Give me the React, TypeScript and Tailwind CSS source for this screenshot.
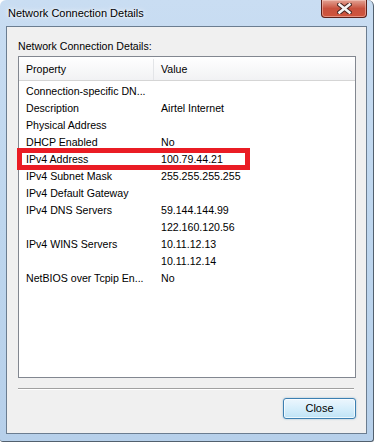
import type { ReactNode } from 'react';

type Row = { name: string; value?: string };

const rows: Row[] = [
  { name: 'Connection-specific DN...' },
  { name: 'Description', value: 'Airtel Internet' },
  { name: 'Physical Address' },
  { name: 'DHCP Enabled', value: 'No' },
  { name: 'IPv4 Address', value: '100.79.44.21' },
  { name: 'IPv4 Subnet Mask', value: '255.255.255.255' },
  { name: 'IPv4 Default Gateway' },
  { name: 'IPv4 DNS Servers', value: '59.144.144.99' },
  { name: '', value: '122.160.120.56' },
  { name: 'IPv4 WINS Servers', value: '10.11.12.13' },
  { name: '', value: '10.11.12.14' },
  { name: 'NetBIOS over Tcpip En...', value: 'No' },
];

function CloseGlyph() {
  return (
    <svg width="15" height="11" viewBox="0 0 15 11" aria-hidden>
      <path d="M2.5 1.5 L12.5 9.5 M12.5 1.5 L2.5 9.5" stroke="#4a2520" strokeWidth="4.6" strokeLinecap="square" />
      <path d="M2.5 1.5 L12.5 9.5 M12.5 1.5 L2.5 9.5" stroke="#f4f4f4" strokeWidth="2.6" strokeLinecap="square" />
    </svg>
  );
}

function Cell({ children, first }: { children?: ReactNode; first?: boolean }) {
  return (
    <div className={first ? 'w-[134px] shrink-0 truncate pl-[7px]' : 'flex-1 truncate pl-[7px]'}>
      {children}
    </div>
  );
}

export default function App() {
  return (
    <div className="relative flex h-[442px] w-[374px] flex-col overflow-hidden rounded-t-[6px] rounded-b-[3px] border-r border-b border-[#52606e] bg-gradient-to-b from-[#c9ddf2] via-[#bed6ee] to-[#b7d0ea] font-['Liberation_Sans',Arial,sans-serif] text-black">
      {/* Title bar */}
      <div className="flex h-[26px] shrink-0 items-start">
        <div className="pt-[6px] pl-[8px] text-[11px] leading-[14px] text-black [text-shadow:0_0_6px_#ffffff,0_0_3px_#ffffff]">
          Network Connection Details
        </div>
        <button
          type="button"
          aria-label="Close"
          className="mr-[6px] ml-auto flex h-[18px] w-[46px] items-center justify-center rounded-b-[4px] border border-t-0 border-[#5c2019] bg-gradient-to-b from-[#e2a294] via-[#c8513e] to-[#d0553c] shadow-[inset_0_0_0_1px_rgba(255,220,210,0.45)]"
        >
          <CloseGlyph />
        </button>
      </div>

      {/* Client area */}
      <div className="mx-[6px] mb-[7px] flex flex-1 flex-col border border-[#6b7d90] bg-[#f0f0f0] pr-[10px] pl-[11px]">
        <div className="pt-[13px] text-[10.6px] leading-[12px]">Network Connection Details:</div>

        <div className="relative mt-[4px] h-[322px] shrink-0 border border-[#828790] bg-white text-[10.6px]">
          <div className="flex h-[24px] items-center border-b border-[#d5d5d5] bg-gradient-to-b from-white to-[#f1f2f4] pt-[2px]">
            <Cell first>Property</Cell>
            <div className="h-full w-px bg-[#e3e5e8]" />
            <Cell>Value</Cell>
          </div>
          <div className="pt-[2px]">
            {rows.map((r, i) => (
              <div key={i} className="flex h-[17px] items-center leading-[17px]">
                <Cell first>{r.name}</Cell>
                <div className="w-px" />
                <Cell>{r.value}</Cell>
              </div>
            ))}
          </div>
          {/* red annotation box */}
          <div className="absolute top-[91px] left-[-2px] h-[22px] w-[233px] border-[5px] border-[#ea1c24]" />
        </div>

        <div className="mt-[10px] mr-[2px] h-[2px] border-t border-b border-t-[#a0a0a0] border-b-white" />

        <div className="mt-[8px] flex justify-end">
          <button
            type="button"
            className="h-[21px] w-[73px] rounded-[3px] border border-[#3c7fb1] bg-gradient-to-b from-[#ecf6fd] via-[#d6eefb] to-[#bfe3f6] text-[11px] leading-[19px] shadow-[inset_0_0_0_1px_rgba(255,255,255,0.7),0_0_2px_rgba(60,127,177,0.5)]"
          >
            Close
          </button>
        </div>
      </div>
    </div>
  );
}
